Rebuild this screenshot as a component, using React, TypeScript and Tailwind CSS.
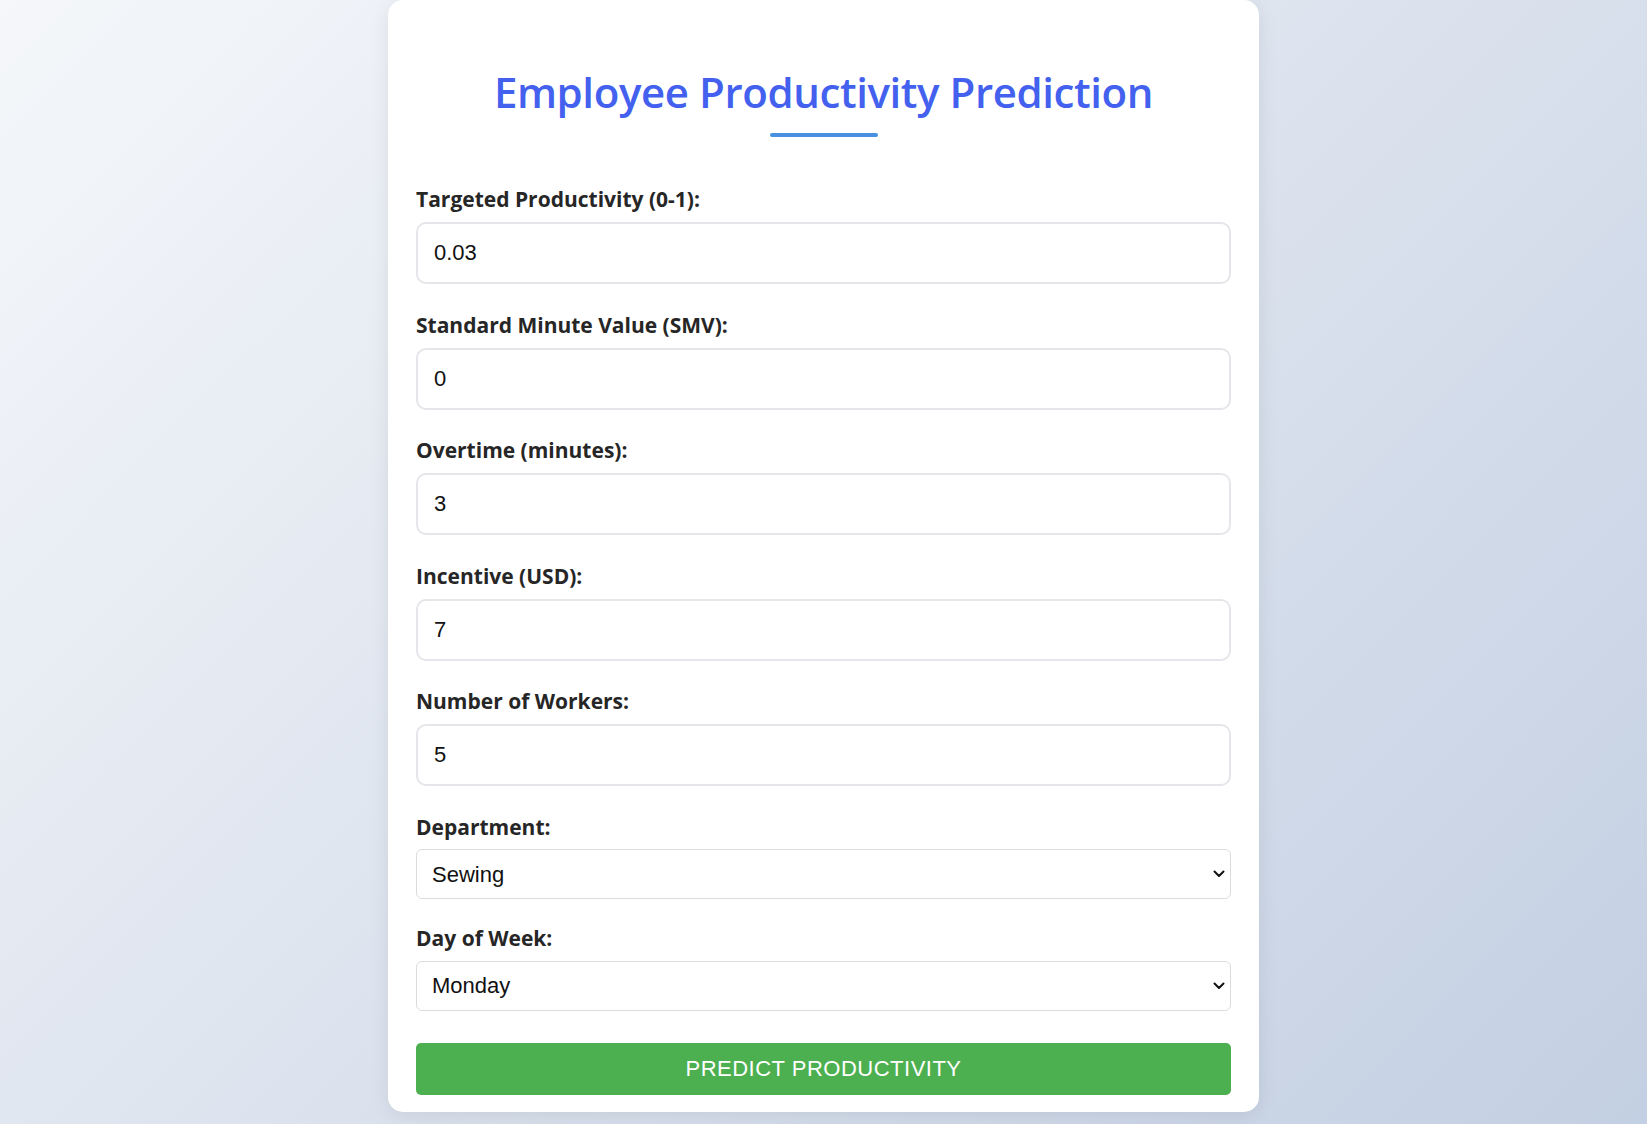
import React, { useState } from 'react';

const fields = [
  { id: 'targeted', label: 'Targeted Productivity (0-1):', value: '0.03' },
  { id: 'smv', label: 'Standard Minute Value (SMV):', value: '0' },
  { id: 'overtime', label: 'Overtime (minutes):', value: '3' },
  { id: 'incentive', label: 'Incentive (USD):', value: '7' },
  { id: 'workers', label: 'Number of Workers:', value: '5' },
];

const Chevron = () => (
  <svg
    className="pointer-events-none absolute right-[6px] top-1/2 -translate-y-1/2"
    width="12"
    height="8"
    viewBox="0 0 12 8"
    fill="none"
  >
    <path d="M1.5 1.5 6 6l4.5-4.5" stroke="#111" strokeWidth="2" strokeLinecap="round" strokeLinejoin="round" />
  </svg>
);

const SelectField = ({
  label,
  value,
  options,
  onChange,
  className,
}: {
  label: string;
  value: string;
  options: string[];
  onChange: (v: string) => void;
  className?: string;
}) => (
  <div className={className}>
    <label className="block text-[21px] leading-[24px] font-bold text-[#262626] mb-[10.5px]">{label}</label>
    <div className="relative">
      <select
        value={value}
        onChange={(e) => onChange(e.target.value)}
        className="appearance-none w-full h-[50px] bg-white border border-[#dcdcdc] rounded-[6px] pl-[15px] pr-10 text-[22px] text-[#111] font-['Liberation_Sans',Arial,sans-serif] outline-none"
      >
        {options.map((o) => (
          <option key={o}>{o}</option>
        ))}
      </select>
      <Chevron />
    </div>
  </div>
);

export default function App() {
  const [values, setValues] = useState<Record<string, string>>(
    Object.fromEntries(fields.map((f) => [f.id, f.value]))
  );
  const [department, setDepartment] = useState('Sewing');
  const [day, setDay] = useState('Monday');

  return (
    <div className="min-h-screen w-full bg-[linear-gradient(135deg,#f5f7fa_0%,#c3cfe2_100%)] font-['Open_Sans','Noto_Sans',sans-serif]">
      <div className="mx-auto w-[871px] bg-white rounded-[15px] shadow-[0_4px_20px_rgba(0,0,0,0.08)] px-[28px] pt-[66px] pb-[17px]">
        <h1 className="text-center text-[42px] leading-[52px] tracking-[-0.4px] font-semibold text-[#4361ee]">
          Employee Productivity Prediction
        </h1>
        <div className="mx-auto mt-[15px] h-[4px] w-[108px] rounded-full bg-[#4a90e2]" />

        <form className="mt-[50px]" onSubmit={(e) => e.preventDefault()}>
          {fields.map((f) => (
            <div key={f.id} className="mb-[28.5px]">
              <label htmlFor={f.id} className="block text-[21px] leading-[24px] font-bold text-[#262626] mb-[11px]">
                {f.label}
              </label>
              <input
                id={f.id}
                type="text"
                value={values[f.id]}
                onChange={(e) => setValues({ ...values, [f.id]: e.target.value })}
                className="w-full h-[62px] border-2 border-[#e4e6ea] rounded-[10px] px-[16px] text-[22px] text-[#111] font-['Liberation_Sans',Arial,sans-serif] outline-none"
              />
            </div>
          ))}

          <SelectField
            label="Department:"
            value={department}
            onChange={setDepartment}
            options={['Sewing', 'Finishing']}
            className="mb-[27px]"
          />
          <SelectField
            label="Day of Week:"
            value={day}
            onChange={setDay}
            options={['Monday', 'Tuesday', 'Wednesday', 'Thursday', 'Saturday', 'Sunday']}
          />

          <button
            type="submit"
            className="mt-[32px] w-full h-[52px] rounded-[5px] bg-[#4caf50] text-white text-[22px] tracking-[0.5px] font-['Liberation_Sans',Arial,sans-serif]"
          >
            PREDICT PRODUCTIVITY
          </button>
        </form>
      </div>
    </div>
  );
}
